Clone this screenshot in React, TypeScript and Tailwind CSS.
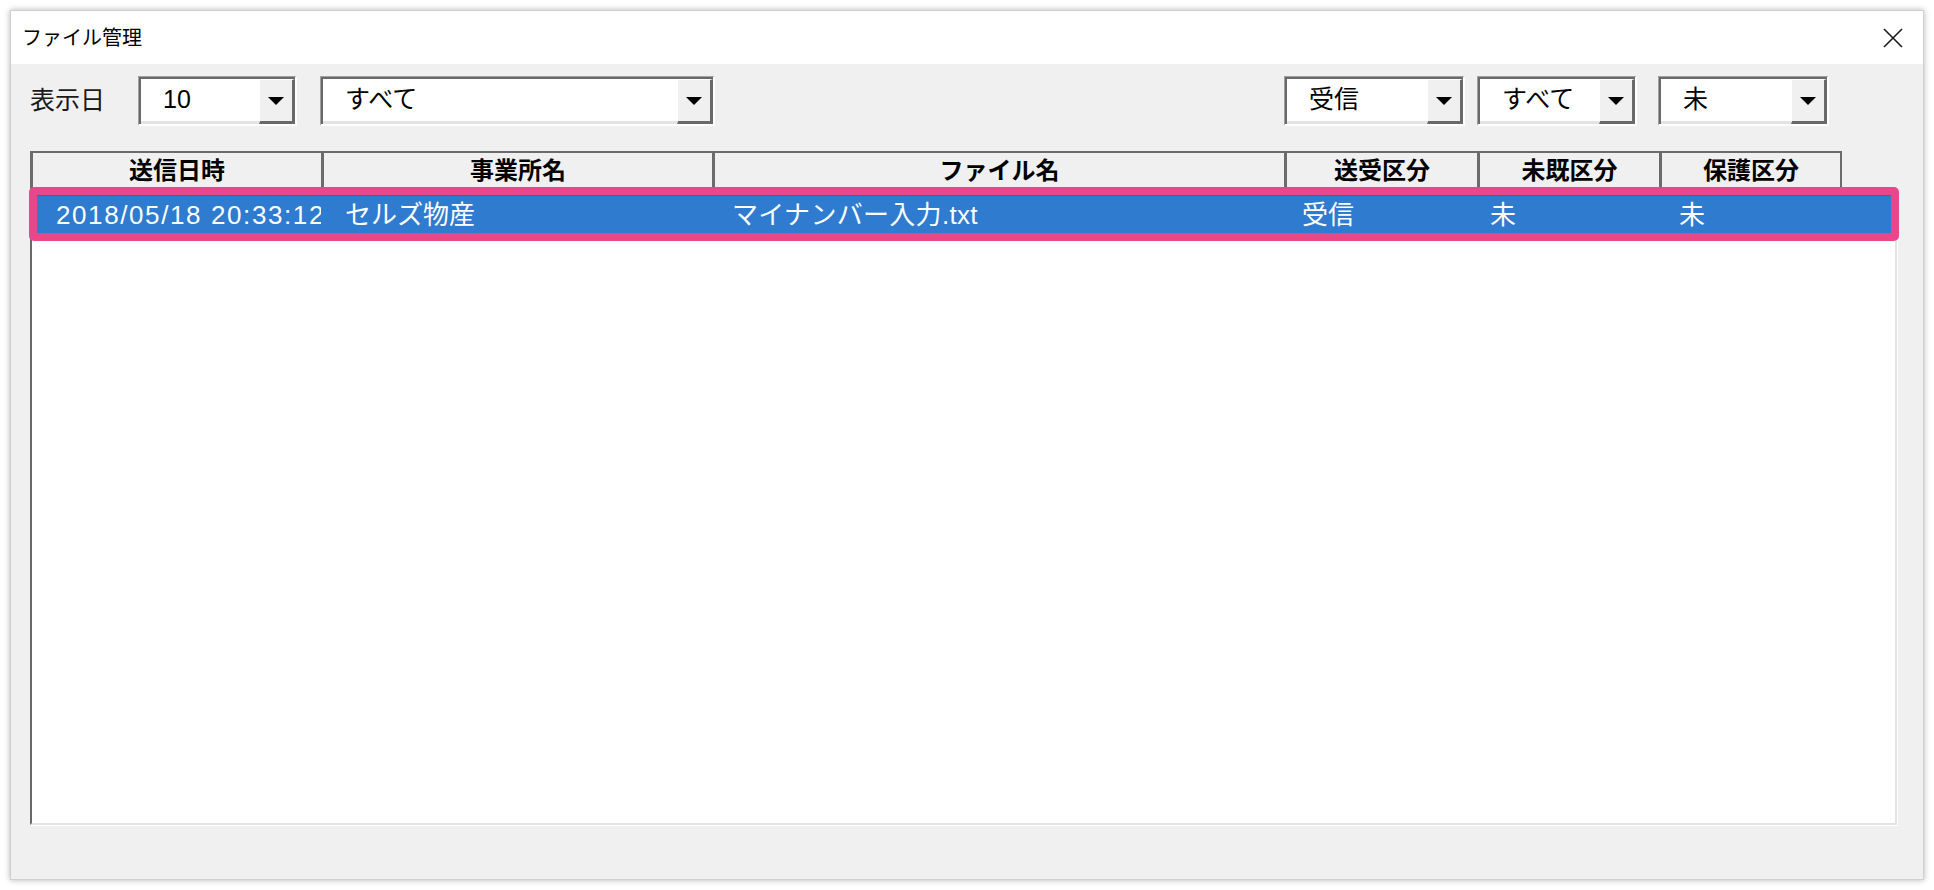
import React from 'react'

const FONT = "font-['Liberation_Sans','Noto_Sans_CJK_JP',sans-serif]"

interface ComboProps {
  value: string
  width: string
  className?: string
}

function Combo({ value, width, className = '' }: ComboProps) {
  return (
    <div
      className={`flex h-[50px] ${width} border-t border-l border-t-[#a0a0a0] border-l-[#a0a0a0] border-b-2 border-r-2 border-b-white border-r-white ${className}`}
    >
      <div className="flex flex-1 bg-white border-t-2 border-l-2 border-t-[#696969] border-l-[#696969]">
        <div className="flex flex-1 items-center pl-[22px] text-[25px] text-black border-b-[3px] border-b-[#e3e3e3]">
          {value}
        </div>
        <div className="flex w-[36px] items-center justify-center bg-[#f0f0f0] border-t border-l border-t-white border-l-white border-b-[3px] border-r-[3px] border-b-[#696969] border-r-[#696969]">
          <div className="h-0 w-0 border-l-[8px] border-r-[8px] border-t-[8px] border-l-transparent border-r-transparent border-t-black" />
        </div>
      </div>
    </div>
  )
}

const headers = [
  { label: '送信日時', w: 'w-[291px]' },
  { label: '事業所名', w: 'w-[391px]' },
  { label: 'ファイル名', w: 'w-[572px]' },
  { label: '送受区分', w: 'w-[193px]' },
  { label: '未既区分', w: 'w-[182px]' },
  { label: '保護区分', w: 'w-[183px]' },
]

export default function App() {
  return (
    <div className={`min-h-[890px] w-[1934px] bg-white p-[10px] ${FONT}`}>
      {/* Dialog window */}
      <div className="flex h-[870px] w-[1914px] flex-col border border-[#cfcfcf] bg-[#f0f0f0] shadow-[0_0_6px_rgba(0,0,0,0.3)]">
        {/* Title bar */}
        <div className="flex h-[53px] items-center justify-between bg-white pl-[11px] pr-[20px]">
          <span className="text-[20px] text-black">ファイル管理</span>
          <svg width="20" height="20" viewBox="0 0 20 20">
            <path d="M1 1 L19 19 M19 1 L1 19" stroke="#1a1a1a" strokeWidth="1.6" />
          </svg>
        </div>

        {/* Filters */}
        <div className="flex items-center pl-[19px] pt-[12px]">
          <span className="w-[108px] text-[25px] text-[#1a1a1a]">表示日</span>
          <Combo value="10" width="w-[159px]" />
          <Combo value="すべて" width="w-[395px]" className="ml-[23px]" />
          <Combo value="受信" width="w-[181px]" className="ml-[569px]" />
          <Combo value="すべて" width="w-[160px]" className="ml-[12px]" />
          <Combo value="未" width="w-[171px]" className="ml-[21px]" />
        </div>

        {/* List with column heads */}
        <div className="relative ml-[19px] mt-[25px] w-[1869px]">
          <div className="flex h-[43px]">
            {headers.map((h, i) => (
              <div
                key={h.label}
                className={`flex ${h.w} items-start justify-center pt-0 bg-[#f0f0f0] border-t-2 border-l-[3px] border-[#6b6b6b] text-[24px] font-bold text-black ${i === headers.length - 1 ? 'border-r-2' : ''}`}
              >
                {h.label}
              </div>
            ))}
          </div>

          <div className="h-[631px] w-[1867px] bg-white border-t-2 border-l-2 border-t-[#5f5f5f] border-l-[#696969] border-b-2 border-r-2 border-b-[#e3e3e3] border-r-[#e3e3e3] shadow-[1px_1px_0_#ffffff]">
            <div className="flex h-[38px] flex-col">
              <div className="h-[2px] bg-[repeating-linear-gradient(90deg,#1a1a1a_0px,#1a1a1a_1px,#d9862e_1px,#d9862e_2px)]" />
              <div className="flex flex-1 items-center bg-[#2e7bd0] text-[26px] text-white">
                <div className="w-[289px] overflow-hidden whitespace-nowrap pl-[24px] tracking-[1.6px]">
                  2018/05/18 20:33:12
                </div>
                <div className="w-[411px] whitespace-nowrap pl-[24px]">セルズ物産</div>
                <div className="w-[570px] whitespace-nowrap tracking-[0.3px]">マイナンバー入力.txt</div>
                <div className="w-[188px]">受信</div>
                <div className="w-[189px]">未</div>
                <div className="flex-1">未</div>
              </div>
            </div>
          </div>

          {/* highlight annotation */}
          <div className="pointer-events-none absolute left-[-1px] top-[36px] h-[54px] w-[1870px] rounded-[5px] border-[8px] border-[#e8478b]" />
        </div>
      </div>
    </div>
  )
}
